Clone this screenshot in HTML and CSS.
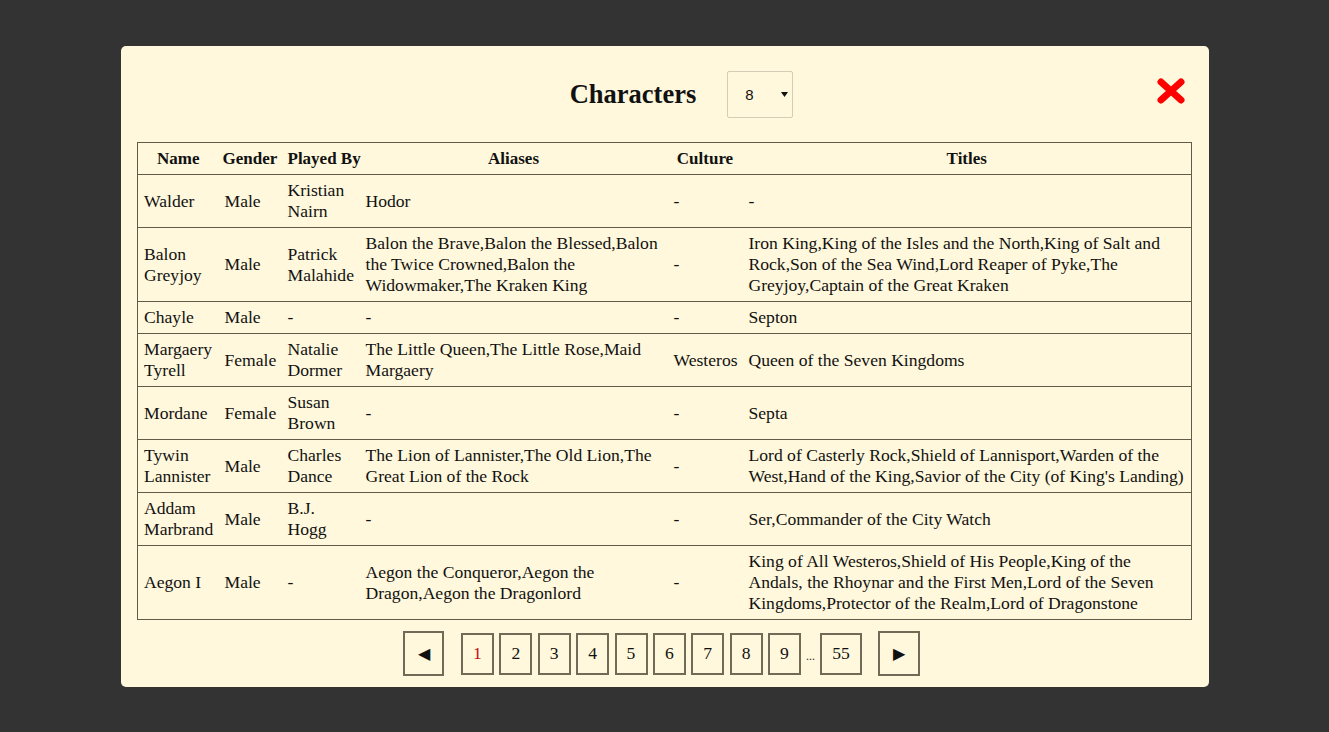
FILE: index.html
```html
<!DOCTYPE html>
<html>
<head>
<meta charset="utf-8">
<link rel="stylesheet" href="styles.css">
</head>
<body>
<div class="modal">
  <div class="head">
    <h1 class="title">Characters</h1>
    <div class="select"><span class="sel-val">8</span><svg class="sel-arrow" width="7" height="5" viewBox="0 0 7 5"><path d="M0 0H7L3.5 5Z" fill="#111"/></svg></div>
  </div>
  <svg class="close" width="28" height="26" viewBox="0 0 28 26"><path d="M4 4L24 22M24 4L4 22" stroke="#f00" stroke-width="7" stroke-linecap="round"/></svg>
  <table class="grid">
    <colgroup><col class="c-name"><col class="c-gender"><col class="c-played"><col class="c-aliases"><col class="c-culture"><col class="c-titles"></colgroup>
    <thead>
      <tr><th>Name</th><th>Gender</th><th>Played By</th><th>Aliases</th><th>Culture</th><th>Titles</th></tr>
    </thead>
    <tbody>
      <tr><td>Walder</td><td>Male</td><td>Kristian Nairn</td><td>Hodor</td><td>-</td><td>-</td></tr>
      <tr><td>Balon Greyjoy</td><td>Male</td><td>Patrick Malahide</td><td>Balon the Brave,Balon the Blessed,Balon the Twice Crowned,Balon the Widowmaker,The Kraken King</td><td>-</td><td>Iron King,King of the Isles and the North,King of Salt and Rock,Son of the Sea Wind,Lord Reaper of Pyke,The Greyjoy,Captain of the Great Kraken</td></tr>
      <tr><td>Chayle</td><td>Male</td><td>-</td><td>-</td><td>-</td><td>Septon</td></tr>
      <tr><td>Margaery Tyrell</td><td>Female</td><td>Natalie Dormer</td><td>The Little Queen,The Little Rose,Maid Margaery</td><td>Westeros</td><td>Queen of the Seven Kingdoms</td></tr>
      <tr><td>Mordane</td><td>Female</td><td>Susan Brown</td><td>-</td><td>-</td><td>Septa</td></tr>
      <tr><td>Tywin Lannister</td><td>Male</td><td>Charles Dance</td><td>The Lion of Lannister,The Old Lion,The Great Lion of the Rock</td><td>-</td><td>Lord of Casterly Rock,Shield of Lannisport,Warden of the West,Hand of the King,Savior of the City (of King's Landing)</td></tr>
      <tr><td>Addam Marbrand</td><td>Male</td><td>B.J. Hogg</td><td>-</td><td>-</td><td>Ser,Commander of the City Watch</td></tr>
      <tr><td>Aegon I</td><td>Male</td><td>-</td><td>Aegon the Conqueror,Aegon the Dragon,Aegon the Dragonlord</td><td>-</td><td>King of All Westeros,Shield of His People,King of the Andals, the Rhoynar and the First Men,Lord of the Seven Kingdoms,Protector of the Realm,Lord of Dragonstone</td></tr>
    </tbody>
  </table>
  <div class="pager">
    <button class="nav prev">&#9664;</button>
    <button class="page current">1</button>
    <button class="page">2</button>
    <button class="page">3</button>
    <button class="page">4</button>
    <button class="page">5</button>
    <button class="page">6</button>
    <button class="page">7</button>
    <button class="page">8</button>
    <button class="page">9</button>
    <span class="dots">...</span>
    <button class="page wide">55</button>
    <button class="nav next">&#9654;</button>
  </div>
</div>
</body>
</html>
```
FILE: styles.css
```css
html, body {
  margin: 0;
  padding: 0;
  background: #333333;
}
body {
  padding-top: 46px;
  height: 732px;
  box-sizing: border-box;
  font-family: "Liberation Serif", "Times New Roman", serif;
}
.modal {
  position: relative;
  margin: 0 120px 0 121px;
  background: #fff8dc;
  border-radius: 5px;
  padding: 0 17px 11px 16px;
}
.head {
  height: 96px;
  display: flex;
  align-items: center;
  justify-content: center;
  padding-left: 34px;
}
.title {
  margin: 0;
  font-size: 26.5px;
  font-weight: bold;
  color: #111;
  line-height: 30px;
}
.select {
  margin-left: 31px;
  width: 64px;
  height: 45px;
  border: 1px solid #d3ccb6;
  border-radius: 2px;
  display: flex;
  align-items: center;
  margin-top: 1px;
  font-family: "Liberation Sans", Arial, sans-serif;
  font-size: 15px;
  color: #111;
}
.sel-val {
  margin-left: 17px;
}
.sel-arrow {
  margin-left: 27px;
}
.close {
  position: absolute;
  top: 32px;
  right: 24px;
}
.grid {
  width: 100%;
  border-collapse: collapse;
  table-layout: fixed;
  border: 1px solid #625b4a;
  font-size: 17.6px;
  line-height: 21px;
  color: #111;
}
.c-name { width: 81px; }
.c-gender { width: 63px; }
.c-played { width: 78px; }
.c-aliases { width: 308px; }
.c-culture { width: 75px; }
.grid th {
  font-weight: bold;
  font-size: 17px;
  padding: 5px 6px;
  white-space: nowrap;
  text-align: center;
  border-bottom: 1px solid #625b4a;
}
.grid th:nth-child(2) {
  padding-left: 4px;
}
.grid td {
  padding: 5px 6px;
  text-align: left;
  vertical-align: middle;
  border-bottom: 1px solid #625b4a;
}
.pager {
  display: flex;
  justify-content: center;
  align-items: center;
  margin-top: 11px;
  padding-right: 6px;
}
.pager button {
  font-family: "Liberation Serif", "Times New Roman", serif;
  background: #fff8dc;
  border: 2px solid #716a56;
  border-radius: 0;
  padding: 0;
  color: #111;
  box-sizing: border-box;
}
.nav {
  width: 42px;
  height: 45px;
  font-size: 16px;
}
.prev { margin-right: 14.3px; width: 41px; }
.next { margin-left: 13.3px; }
.page {
  width: 33px;
  height: 42px;
  font-size: 17.6px;
  margin: 0 2.7px;
}
.page.wide { width: 42px; }
.page.current { color: #c41010; }
.dots {
  font-size: 12px;
  color: #333;
  margin: 6px 2.3px 0;
}
```
